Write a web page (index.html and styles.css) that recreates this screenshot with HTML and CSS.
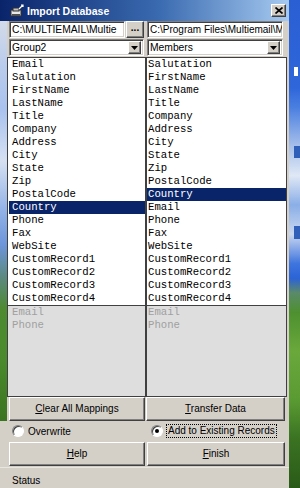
FILE: index.html
```html
<!DOCTYPE html>
<html lang="en">
<head>
    <meta charset="UTF-8">
    <title>Import Database</title>
    <link rel="stylesheet" href="styles.css">
</head>
<body>
    <div class="window">
        <!-- Title bar -->
        <div class="titlebar">
            <svg class="app-icon" viewBox="0 0 15 14" width="15" height="14">
                <rect x="1" y="6" width="10" height="6" fill="#e8e8e8" stroke="#303030" stroke-width="1"/>
                <rect x="2" y="10" width="8" height="2" fill="#505050"/>
                <rect x="3" y="4" width="6" height="3" fill="#c0c0c0" stroke="#303030" stroke-width="1"/>
                <path d="M9 5 L13 1 M11 1 L13 1 L13 3" stroke="#fff" stroke-width="1.2" fill="none"/>
            </svg>
            <span class="title">Import Database</span>
            <span class="close">
                <svg viewBox="0 0 8 7" width="8" height="7">
                    <path d="M0.5 0.5 L7.5 6.5 M7.5 0.5 L0.5 6.5" stroke="#000" stroke-width="1.7"/>
                </svg>
            </span>
        </div>

        <div class="main">
            <div class="sky"></div>
            <div class="cols">
                <!-- Source side -->
                <div class="col col-left">
                    <div class="field-row">
                        <div class="field field-left">C:\MULTIEMAIL\Multie</div>
                        <div class="browse">...</div>
                    </div>
                    <div class="combo combo-left">
                        <span class="combo-text">Group2</span>
                        <span class="drop"><svg viewBox="0 0 7 4" width="7" height="4"><path d="M0 0 H7 L3.5 4 Z" fill="#000"/></svg></span>
                    </div>
                    <ul class="list list-left">
                        <li>Email</li>
                        <li>Salutation</li>
                        <li>FirstName</li>
                        <li>LastName</li>
                        <li>Title</li>
                        <li>Company</li>
                        <li>Address</li>
                        <li>City</li>
                        <li>State</li>
                        <li>Zip</li>
                        <li>PostalCode</li>
                        <li class="selected">Country</li>
                        <li>Phone</li>
                        <li>Fax</li>
                        <li>WebSite</li>
                        <li>CustomRecord1</li>
                        <li>CustomRecord2</li>
                        <li>CustomRecord3</li>
                        <li>CustomRecord4</li>
                    </ul>
                    <ul class="list disabled list-left">
                        <li>Email</li>
                        <li>Phone</li>
                    </ul>
                    <div class="btn btn-left"><u>C</u>lear All Mappings</div>
                </div>

                <!-- Target side -->
                <div class="col col-right">
                    <div class="field-row">
                        <div class="field field-right">C:\Program Files\Multiemail\M</div>
                    </div>
                    <div class="combo combo-right">
                        <span class="combo-text">Members</span>
                        <span class="drop"><svg viewBox="0 0 7 4" width="7" height="4"><path d="M0 0 H7 L3.5 4 Z" fill="#000"/></svg></span>
                    </div>
                    <ul class="list list-right">
                        <li>Salutation</li>
                        <li>FirstName</li>
                        <li>LastName</li>
                        <li>Title</li>
                        <li>Company</li>
                        <li>Address</li>
                        <li>City</li>
                        <li>State</li>
                        <li>Zip</li>
                        <li>PostalCode</li>
                        <li class="selected">Country</li>
                        <li>Email</li>
                        <li>Phone</li>
                        <li>Fax</li>
                        <li>WebSite</li>
                        <li>CustomRecord1</li>
                        <li>CustomRecord2</li>
                        <li>CustomRecord3</li>
                        <li>CustomRecord4</li>
                    </ul>
                    <ul class="list disabled list-right">
                        <li>Email</li>
                        <li>Phone</li>
                    </ul>
                    <div class="btn btn-right"><u>T</u>ransfer Data</div>
                </div>
            </div>
        </div>

        <div class="lower">
            <div class="radio-row">
                <label class="radio-item radio-left"><span class="radio"></span>Overwrite</label>
                <label class="radio-item"><span class="radio checked"></span><span class="focus">Add to Existing Records</span></label>
            </div>
            <div class="btn-row">
                <div class="btn btn-help"><u>H</u>elp</div>
                <div class="btn btn-finish"><u>F</u>inish</div>
            </div>
            <div class="status">Status</div>
        </div>
    </div>

    <!-- Desktop showing behind the window -->
    <div class="desktop">
        <span class="desk-icon icon-a"></span>
        <span class="desk-icon icon-b"></span>
        <span class="desk-icon icon-c"></span>
    </div>
</body>
</html>
```

FILE: styles.css
```css
/* General */
body {
    margin: 0;
    width: 300px;
    height: 488px;
    display: flex;
    overflow: hidden;
    font-family: "Liberation Sans", Arial, sans-serif;
    font-size: 10px;
    color: #000;
}

.window {
    width: 289px;
    display: flex;
    flex-direction: column;
    background: #d4d0c8;
}

/* Title bar */
.titlebar {
    height: 21px;
    box-sizing: border-box;
    display: flex;
    align-items: center;
    padding: 0 3px 0 10px;
    background: linear-gradient(to right, #0a246a 0%, #3a6ab0 55%, #a6caf0 100%);
    color: #fff;
}

.app-icon {
    margin-right: 2px;
}

.title {
    flex: 1;
    font-weight: bold;
    font-size: 10.5px;
}

.close {
    width: 15px;
    height: 13px;
    box-sizing: border-box;
    display: flex;
    align-items: center;
    justify-content: center;
    background: #d4d0c8;
    border: 1px solid;
    border-color: #fff #404040 #404040 #fff;
    box-shadow: inset -1px -1px #808080;
}

/* Main area */
.main {
    display: flex;
    height: 400px;
}

.sky {
    width: 7px;
    background: linear-gradient(to bottom,
        #d3dbe9 0%, #bccdec 10%, #a9c2ee 22%, #d6e0f2 35%,
        #8fb0e6 48%, #6d95da 56%, #5c8a80 64%, #4d8a30 72%,
        #4a8a2c 85%, #3b7420 100%);
}

.cols {
    flex: 1;
    display: flex;
    padding-right: 2px;
}

.col {
    display: flex;
    flex-direction: column;
}

.col-left {
    width: 139px;
}

.col-right {
    width: 141px;
}

/* Text fields */
.field-row {
    display: flex;
    height: 17px;
    margin-bottom: 1px;
}

.field,
.combo {
    box-sizing: border-box;
    background: #fff;
    border: 1px solid;
    border-color: #808080 #fff #fff #808080;
    box-shadow: inset 1px 1px #404040, inset -1px -1px #d4d0c8;
    white-space: nowrap;
    overflow: hidden;
    font-size: 10.3px;
    line-height: 15px;
}

.field {
    padding-left: 2px;
}

.field-left {
    width: 116px;
    margin-left: 2px;
}

.field-right {
    width: 136px;
    margin-left: 1px;
    font-size: 10px;
}

.browse {
    width: 18px;
    margin-left: 1px;
    box-sizing: border-box;
    border: 1px solid;
    border-color: #fff #404040 #404040 #fff;
    box-shadow: inset -1px -1px #808080;
    text-align: center;
    font-weight: bold;
    line-height: 11px;
}

/* Combo boxes */
.combo {
    display: flex;
    height: 17px;
    margin-bottom: 1px;
    padding: 1px 2px 1px 2px;
}

.combo-left {
    width: 135px;
    margin-left: 2px;
}

.combo-right {
    width: 136px;
    margin-left: 1px;
}

.combo-text {
    flex: 1;
    line-height: 13px;
}

.drop {
    width: 13px;
    box-sizing: border-box;
    display: flex;
    align-items: center;
    justify-content: center;
    background: #d4d0c8;
    border: 1px solid;
    border-color: #fff #404040 #404040 #fff;
    box-shadow: inset -1px -1px #808080;
}

/* Field lists */
.list {
    list-style: none;
    margin: 0;
    padding: 0;
    box-sizing: border-box;
    height: 248px;
    background: #fff;
    border: 1px solid #404040;
    border-bottom: none;
    font-family: "Liberation Mono", "Courier New", monospace;
    font-size: 8pt;
    overflow: hidden;
}

.list li {
    height: 13px;
    line-height: 13px;
    white-space: nowrap;
}

.list-left li {
    padding-left: 4px;
}

.list-right li {
    padding-left: 1px;
}

.list li.selected {
    background: #0a246a;
    color: #fff;
}

.list-left li.selected {
    margin-left: 1px;
    padding-left: 3px;
}

.list.disabled {
    height: 92px;
    background: #dedede;
    border-bottom: 1px solid #404040;
    color: #a0a0a0;
}

/* Buttons */
.btn {
    box-sizing: border-box;
    height: 24px;
    border: 1px solid;
    border-color: #fff #404040 #404040 #fff;
    box-shadow: inset -1px -1px #808080;
    text-align: center;
    line-height: 22px;
    font-size: 10px;
}

.btn-left {
    width: 136px;
    margin-left: 2px;
}

.btn-right {
    width: 139px;
}

/* Lower panel */
.lower {
    display: flex;
    flex-direction: column;
    height: 67px;
}

.radio-row {
    display: flex;
    height: 20px;
    padding-left: 12px;
    margin-bottom: 1px;
}

.radio-item {
    display: flex;
    align-items: center;
    gap: 4px;
}

.radio-left {
    width: 139px;
}

.radio {
    width: 12px;
    height: 12px;
    box-sizing: border-box;
    border-radius: 50%;
    background: #fff;
    border: 1px solid;
    border-color: #808080 #fff #fff #808080;
    box-shadow: inset 1px 1px #404040;
    display: flex;
    align-items: center;
    justify-content: center;
}

.radio.checked::after {
    content: "";
    width: 4px;
    height: 4px;
    border-radius: 50%;
    background: #000;
}

.focus {
    border: 1px dotted #000;
    padding: 0 1px;
    margin-left: -1px;
    line-height: 12px;
}

.btn-row {
    display: flex;
    gap: 2px;
    padding-left: 9px;
}

.btn-help {
    width: 136px;
}

.btn-finish {
    width: 138px;
}

.status {
    flex: 1;
    margin-top: 1px;
    border-top: 1px solid #e8e6e0;
    padding: 7px 0 0 12px;
    line-height: 12px;
    font-size: 10px;
}

/* Desktop behind */
.desktop {
    flex: 1;
    position: relative;
    background: linear-gradient(to bottom,
        #2a5fd4 0%, #2f66da 18%, #4a7fe0 22%, #a8c0ea 30%,
        #dfe8f5 36%, #8aaee6 42%, #c9d7f0 48%, #3f75de 54%,
        #2c63d6 57%, #5a8a6a 60%, #4e9030 64%, #6aa83c 72%,
        #5a9a32 82%, #3a7222 90%, #2a5a18 100%);
}

.desk-icon {
    position: absolute;
    left: 5px;
    width: 6px;
    background: #fff;
}

.icon-a {
    top: 67px;
    height: 9px;
    width: 4px;
}

.icon-b {
    top: 146px;
    height: 12px;
    background: #2f5fb8;
}

.icon-c {
    top: 226px;
    height: 13px;
    background: #2f5fb8;
}
```
